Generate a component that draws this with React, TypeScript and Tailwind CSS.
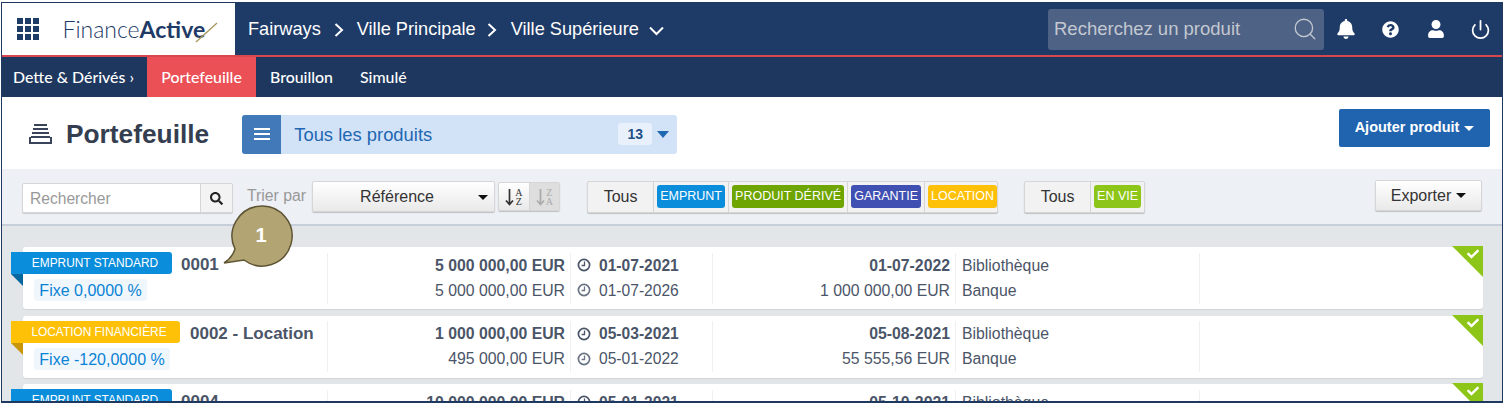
import { Power, Search } from "lucide-react";
import { FaBell, FaCheck, FaQuestionCircle, FaSearch, FaUser } from "react-icons/fa";

const rows = [
  {
    type: "EMPRUNT STANDARD", typeW: "w-[161px]", nameW: "w-[147px]", color: "bg-[#0a8ddb]", fold: "border-t-[#07679f]",
    name: "0001", rate: "Fixe 0,0000 %", rateW: "w-[113px]",
    a1: "5 000 000,00 EUR", a2: "5 000 000,00 EUR", d1: "01-07-2021", d2: "01-07-2026",
    e1: "01-07-2022", e2: "1 000 000,00 EUR",
  },
  {
    type: "LOCATION FINANCIÈRE", typeW: "w-[169px]", nameW: "w-[156px]", color: "bg-[#ffc107]", fold: "border-t-[#c9960a]",
    name: "0002 - Location", rate: "Fixe -120,0000 %", rateW: "w-[136px]",
    a1: "1 000 000,00 EUR", a2: "495 000,00 EUR", d1: "05-03-2021", d2: "05-01-2022",
    e1: "05-08-2021", e2: "55 555,56 EUR",
  },
  {
    type: "EMPRUNT STANDARD", typeW: "w-[161px]", nameW: "w-[147px]", color: "bg-[#0a8ddb]", fold: "border-t-[#07679f]",
    name: "0004", rate: "Fixe 0,0000 %", rateW: "w-[113px]",
    a1: "10 000 000,00 EUR", a2: "10 000 000,00 EUR", d1: "05-01-2021", d2: "05-01-2026",
    e1: "05-10-2021", e2: "1 000 000,00 EUR",
  },
];

function Clock({ cls }: { cls: string }) {
  return (
    <svg className={cls} width="14" height="14" viewBox="0 0 14 14" fill="none" stroke="currentColor">
      <circle cx="7" cy="7" r="5.6" strokeWidth="1.7" />
      <path d="M7.5 3.6 V7.5 H4.6" strokeWidth="1.3" />
    </svg>
  );
}

function SortIcon({ top, bottom, cls }: { top: string; bottom: string; cls: string }) {
  return (
    <span className={`flex flex-1 items-center justify-center gap-[1px] ${cls}`}>
      <svg width="9" height="18" viewBox="0 0 9 18" fill="none" stroke="currentColor" strokeWidth="1.7">
        <path d="M4.5 1 V16 M1 12.5 L4.5 16.5 L8 12.5" />
      </svg>
      <span className="flex flex-col text-center font-['Liberation_Serif',serif] text-[10px] leading-[9px]">
        <span>{top}</span>
        <span>{bottom}</span>
      </span>
    </span>
  );
}

function Row({ r }: { r: (typeof rows)[number] }) {
  return (
    <div className="relative h-[62px] shrink-0 rounded-[3px] bg-white py-[5.5px] text-[15.8px] leading-[25px] text-[#4b5568] shadow-[0_1px_1px_rgba(0,0,0,0.08)]">
      <div className="flex h-full">
        <div className="w-[305px] shrink-0 border-r border-[#eef0f2] pl-[11px]">
          <div className="flex h-[24px] items-center">
            <span className={`${r.nameW} shrink-0`} />
            <span className="text-[17px] font-bold">{r.name}</span>
          </div>
          <div className={`${r.rateW} mt-[2.5px] h-[22px] rounded-[3px] bg-[#eff7fd] text-center text-[16px] leading-[24px] text-[#0a82d4]`}>
            {r.rate}
          </div>
        </div>
        <div className="w-[243px] shrink-0 border-r border-[#eef0f2] pr-[5px] text-right">
          <div className="font-bold">{r.a1}</div>
          <div>{r.a2}</div>
        </div>
        <div className="w-[142px] shrink-0 border-r border-[#eef0f2] pl-[6px] text-[15.6px]">
          <div className="flex items-center gap-[8px] font-bold">
            <Clock cls="" />
            {r.d1}
          </div>
          <div className="flex items-center gap-[8px]">
            <Clock cls="text-[#6b7484]" />
            {r.d2}
          </div>
        </div>
        <div className="w-[243px] shrink-0 border-r border-[#eef0f2] pr-[5px] text-right">
          <div className="font-bold">{r.e1}</div>
          <div>{r.e2}</div>
        </div>
        <div className="w-[244px] shrink-0 border-r border-[#eef0f2] pl-[6px]">
          <div>Bibliothèque</div>
          <div>Banque</div>
        </div>
      </div>
      {/* ribbon */}
      <div className={`absolute left-[-12px] top-[5px] ${r.typeW} h-[22px] rounded-r-[3px] ${r.color} pl-[7px] text-center text-[11.9px] leading-[22px] text-white`}>
        {r.type}
      </div>
      <div className={`absolute left-[-12px] top-[27px] size-0 border-l-[12px] border-t-[12px] border-l-transparent ${r.fold}`} />
      {/* status corner */}
      <div className="absolute right-0 top-[-1px] size-0 border-l-[31px] border-t-[31px] border-l-transparent border-t-[#8dc518]" />
      <FaCheck className="absolute right-[4px] top-[1px] size-[12px] text-white" />
    </div>
  );
}

function Chip({ label, cls }: { label: string; cls: string }) {
  return (
    <div className="flex h-full items-center border-l border-[#d5d5d5] px-[3px]">
      <span className={`${cls} h-[23px] rounded-[3px] text-center text-[12.5px] leading-[23px] text-white`}>{label}</span>
    </div>
  );
}

const btn = "border border-[#d6d6d6] bg-gradient-to-b from-white to-[#e9e9e9] shadow-[0_1px_1px_rgba(0,0,0,0.2)]";

export default function App() {
  return (
    <div className="flex h-[404px] w-[1504px] bg-white pb-[1px] pl-[1px] pr-[1px] pt-[2px]">
      <div className="relative flex min-w-0 flex-1 flex-col overflow-hidden border border-b-2 border-[#1e3860] bg-white font-['Liberation_Sans',sans-serif]">
        {/* top bar */}
        <div className="flex h-[54px] shrink-0 items-center border-b-2 border-[#d9474e] bg-[#1e3a66] text-white">
          <div className="flex h-[52px] w-[233px] shrink-0 items-center bg-white pl-[15px]">
            <div className="grid grid-cols-3 gap-[2.5px]">
              {Array.from({ length: 9 }).map((_, i) => (
                <span key={i} className="size-[5.5px] bg-[#1e3a66]" />
              ))}
            </div>
            <div className="relative ml-[24px] font-['Lato',sans-serif] text-[23px] text-[#1e3a66]">
              <span className="font-light">Finance</span>
              <span className="font-bold">Active</span>
              <svg className="absolute right-[-14px] top-[9px]" width="24" height="24" viewBox="0 0 24 24">
                <path d="M1 21 L22 2" stroke="#a9995f" strokeWidth="1.4" />
              </svg>
            </div>
          </div>
          <div className="ml-[13px] mt-[2px] flex items-center text-[18.2px]">
            <span>Fairways</span>
            <svg className="ml-[13px]" width="10" height="14" viewBox="0 0 10 14" fill="none" stroke="white" strokeWidth="2"><path d="M1.5 1 L8 7 L1.5 13" /></svg>
            <span className="ml-[13px]">Ville Principale</span>
            <svg className="ml-[11px]" width="10" height="14" viewBox="0 0 10 14" fill="none" stroke="white" strokeWidth="2"><path d="M1.5 1 L8 7 L1.5 13" /></svg>
            <span className="ml-[14px]">Ville Supérieure</span>
            <svg className="ml-[10px] mt-[2px]" width="15" height="10" viewBox="0 0 15 10" fill="none" stroke="white" strokeWidth="2"><path d="M1 1.5 L7.5 8 L14 1.5" /></svg>
          </div>
          <div className="ml-auto flex h-[41px] w-[276px] items-center rounded-[3px] bg-[#4e6285] pl-[6px] pr-[6px] text-[18.5px] text-[#c3c8d1]">
            <span>Recherchez un produit</span>
            <Search className="ml-auto size-[26px]" strokeWidth={1.2} />
          </div>
          <div className="ml-[12px] mr-[11px] flex items-center">
            <FaBell className="size-[20px]" />
            <FaQuestionCircle className="ml-[26px] size-[17px]" />
            <FaUser className="ml-[28px] size-[18px]" />
            <Power className="ml-[25px] size-[21px]" strokeWidth={2} />
          </div>
        </div>
        {/* sub nav */}
        <div className="flex h-[40px] shrink-0 items-center bg-[#1e375e] font-['Lato',sans-serif] text-[15.9px] font-medium text-white">
          <div className="w-[145px] pl-[11px]">Dette &amp; Dérivés ›</div>
          <div className="flex h-full w-[109px] items-center justify-center bg-[#ea5056]">Portefeuille</div>
          <div className="ml-[14px]">Brouillon</div>
          <div className="ml-[27px]">Simulé</div>
        </div>
        {/* page header */}
        <div className="flex h-[72px] shrink-0 items-center bg-white pt-[2px]">
          <svg className="ml-[26px]" width="25" height="24" viewBox="0 0 25 24" fill="#39435a">
            <rect x="6" y="2" width="13" height="2" />
            <rect x="5" y="6" width="15" height="2" />
            <rect x="4" y="10" width="17" height="2" />
            <rect x="3" y="14" width="19" height="2" />
            <path d="M1 15 H3 V20 H22 V15 H24 V22 H1 Z" />
          </svg>
          <h1 className="ml-[13px] mt-[1px] text-[26.3px] font-bold text-[#343e50]">Portefeuille</h1>
          <div className="ml-[33px] flex h-[39px] w-[435px] overflow-hidden rounded-[3px] bg-[#d2e3f8]">
            <div className="flex w-[39px] flex-col items-center justify-center gap-[3px] bg-[#4179b9]">
              <span className="h-[2px] w-[16px] bg-white" />
              <span className="h-[2px] w-[16px] bg-white" />
              <span className="h-[2px] w-[16px] bg-white" />
            </div>
            <span className="ml-[13px] mt-[1px] self-center text-[18.4px] text-[#1f67b1]">Tous les produits</span>
            <span className="ml-auto h-[22px] w-[34px] self-center rounded-[3px] bg-[#e8f1fb] text-center text-[14px] font-bold leading-[22px] text-[#1f4f86]">13</span>
            <span className="ml-[5px] mr-[8px] size-0 self-center border-x-[6px] border-t-[7px] border-x-transparent border-t-[#1f67b1]" />
          </div>
          <div className="ml-auto mr-[12px] mt-[-12px] flex h-[38px] w-[151px] items-center justify-center gap-[5px] rounded-[2px] bg-[#2064b0] text-[14.5px] font-bold text-white">
            Ajouter produit
            <span className="size-0 border-x-[5px] border-t-[5px] border-x-transparent border-t-white" />
          </div>
        </div>
        {/* toolbar */}
        <div className="flex h-[57px] shrink-0 items-center border-b-2 border-[#c5ced9] bg-[#edf0f5] pl-[20px] text-[16px] text-[#333]">
          <div className="mt-[3px] flex h-[30px] w-[211px] overflow-hidden rounded-[2px] border border-[#d6d6d6] bg-white shadow-[0_1px_1px_rgba(0,0,0,0.15)]">
            <span className="flex-1 pl-[7px] text-[15.6px] leading-[30px] text-[#999]">Rechercher</span>
            <span className="flex w-[32px] items-center justify-center border-l border-[#d6d6d6] bg-[#f3f3f3]">
              <FaSearch className="size-[13px] text-[#222]" />
            </span>
          </div>
          <span className="ml-[14px] mt-[-2px] text-[15.8px] text-[#999]">Trier par</span>
          <div className={`${btn} ml-[6px] flex h-[31px] w-[183px] items-center rounded-[2px] pl-[47px] pr-[6px] pt-[1px]`}>
            Référence
            <span className="ml-auto size-0 border-x-[5px] border-t-[5px] border-x-transparent border-t-[#111]" />
          </div>
          <div className={`${btn} ml-[3px] flex h-[29px] w-[62px] rounded-[2px]`}>
            <SortIcon top="A" bottom="Z" cls="text-[#333]" />
            <SortIcon top="Z" bottom="A" cls="border-l border-[#d6d6d6] bg-[#dedede] text-[#aaa]" />
          </div>
          <div className={`${btn} ml-[27px] flex h-[32px] w-[411px] items-center rounded-[2px] !bg-none bg-[#f2f2f2]`}>
            <span className="w-[65px] shrink-0 text-center">Tous</span>
            <Chip label="EMPRUNT" cls="w-[68px] bg-[#0a8ddb]" />
            <Chip label="PRODUIT DÉRIVÉ" cls="w-[112px] bg-[#6ea500]" />
            <Chip label="GARANTIE" cls="w-[70px] bg-[#3f4fb2]" />
            <Chip label="LOCATION" cls="w-[69px] bg-[#ffc107]" />
          </div>
          <div className={`${btn} ml-[26px] flex h-[32px] w-[121px] items-center rounded-[2px] !bg-none bg-[#f2f2f2]`}>
            <span className="w-[65px] shrink-0 text-center">Tous</span>
            <Chip label="EN VIE" cls="w-[47px] bg-[#8dc518]" />
          </div>
          <div className={`${btn} ml-auto mr-[20px] mt-[-2px] flex h-[31px] w-[107px] items-center justify-center gap-[5px] rounded-[2px]`}>
            Exporter
            <span className="size-0 border-x-[5px] border-t-[5px] border-x-transparent border-t-[#111]" />
          </div>
        </div>
        {/* list */}
        <div className="flex flex-1 flex-col gap-[6.5px] overflow-hidden bg-[#e3e6e9] pl-[21px] pr-[19px] pt-[21px]">
          {rows.map((r) => (
            <Row key={r.name} r={r} />
          ))}
        </div>
        {/* callout */}
        <div className="absolute left-[222px] top-[203px] h-[66px] w-[72px]">
          <svg width="72" height="66" viewBox="0 0 72 66" className="absolute inset-0 overflow-visible">
            <path d="M11 43 A30 30 0 1 1 20 54 L0 57 Q8 52 11 43 Z" fill="#b3a573" stroke="#5f5535" strokeWidth="1.5" />
          </svg>
          <span className="absolute left-[31.5px] top-[14px] text-[20px] font-bold text-white">1</span>
        </div>
      </div>
    </div>
  );
}
